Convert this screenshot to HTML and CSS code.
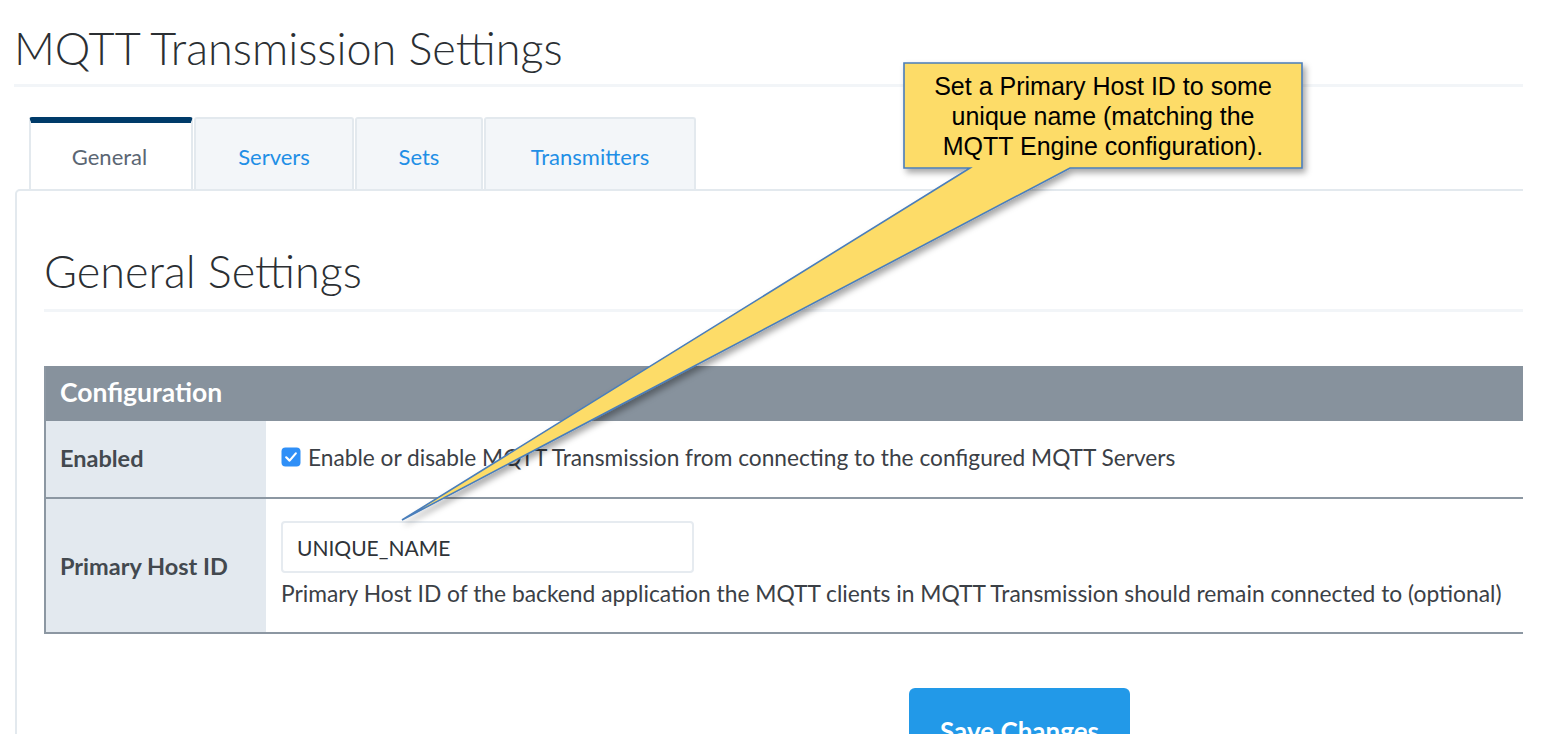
FILE: index.html
```html
<!DOCTYPE html>
<html lang="en">
<head>
<meta charset="utf-8">
<title>MQTT Transmission Settings</title>
<link rel="stylesheet" href="styles.css">
</head>
<body>
<div class="page">
  <h1 class="title">MQTT Transmission Settings</h1>
  <ul class="tabs">
    <li class="tab tab-active tab-general">General</li>
    <li class="tab tab-servers">Servers</li>
    <li class="tab tab-sets">Sets</li>
    <li class="tab tab-transmitters">Transmitters</li>
  </ul>
  <div class="panel">
    <h2 class="section-title">General Settings</h2>
    <div class="config">
      <div class="config-head">Configuration</div>
      <div class="config-row row-enabled">
        <div class="config-label">Enabled</div>
        <div class="config-value">
          <label class="check-line">
            <span class="checkbox">
              <svg viewBox="0 0 20 20" width="20" height="20"><rect x="0.5" y="0.5" width="19" height="19" rx="4" fill="#2f8ff7"/><path d="M5.2 10.3 L8.6 13.6 L14.8 6.4" fill="none" stroke="#fff" stroke-width="2.2" stroke-linecap="round" stroke-linejoin="round"/></svg>
            </span>
            <span>Enable or disable MQTT Transmission from connecting to the configured MQTT Servers</span>
          </label>
        </div>
      </div>
      <div class="config-row row-host">
        <div class="config-label">Primary Host ID</div>
        <div class="config-value value-host">
          <div class="text-input">UNIQUE_NAME</div>
          <div class="help">Primary Host ID of the backend application the MQTT clients in MQTT Transmission should remain connected to (optional)</div>
        </div>
      </div>
    </div>
    <div class="actions">
      <button class="btn-save">Save Changes</button>
    </div>
  </div>

  <div class="callout">
    <svg class="callout-shape" width="1000" height="560" viewBox="0 0 1000 560">
      <defs>
        <filter id="sh" x="-10%" y="-10%" width="130%" height="130%">
          <feDropShadow dx="3" dy="4" stdDeviation="3" flood-color="#000" flood-opacity="0.35"/>
        </filter>
      </defs>
      <path d="M904 63 H1302 V168 H1070 L402 520 L970 168 H904 Z" fill="#fddc67" stroke="#4a7ebb" stroke-width="1.6" stroke-linejoin="miter" filter="url(#sh)" transform="translate(-380 0)"/>
    </svg>
    <div class="callout-text">Set a Primary Host ID to some<br>unique name (matching the<br>MQTT Engine configuration).</div>
  </div>
</div>
</body>
</html>
```

FILE: styles.css
```css
* { box-sizing: border-box; }

html, body {
  margin: 0;
  padding: 0;
  background: #ffffff;
}

body {
  font-family: "Lato", "Open Sans", sans-serif;
  color: #3f454b;
}

.page {
  position: relative;
  width: 1523px;
  height: 734px;
  padding-left: 15px;
  overflow: hidden;
}

.title {
  margin: 0;
  padding-top: 22px;
  height: 87px;
  font-size: 45px;
  line-height: 52px;
  font-weight: 300;
  color: #2b2f33;
  border-bottom: 3px solid #f2f5f8;
  margin-left: -1px;
}

.tabs {
  list-style: none;
  margin: 30px 0 0 0;
  padding: 0 0 0 14px;
  display: flex;
  gap: 1px;
  height: 72px;
}

.tab {
  height: 72px;
  display: flex;
  align-items: center;
  justify-content: center;
  font-size: 22px;
  color: #1f8fe6;
  background: #f3f6f9;
  border: 2px solid #e3e9ee;
  border-bottom: none;
  border-top-left-radius: 3px;
  border-top-right-radius: 3px;
  padding-top: 4px;
}

.tab-active {
  background: #ffffff;
  color: #5b6673;
  border-top: 6px solid #003b69;
  padding-top: 0;
}

.tab-general { width: 164px; padding-right: 3px; }
.tab-servers { width: 160px; }
.tab-sets { width: 128px; }
.tab-transmitters { width: 212px; }

.panel {
  border: 2px solid #e3e9ee;
  border-top-left-radius: 5px;
  margin-right: -40px;
  padding: 0 40px 40px 27px;
  height: 600px;
  margin-top: 0;
}

.section-title {
  margin: 0;
  padding-top: 54px;
  height: 121px;
  font-size: 45px;
  line-height: 52px;
  font-weight: 300;
  color: #2b2f33;
  border-bottom: 3px solid #f2f5f8;
  margin-right: -10px;
}

.config {
  margin-top: 54px;
  border-left: 2px solid #8c97a2;
  margin-right: -10px;
}

.config-head {
  height: 55px;
  background: #87929d;
  color: #ffffff;
  font-weight: 700;
  font-size: 26.5px;
  display: flex;
  align-items: center;
  padding-left: 14px;
  padding-bottom: 3px;
}

.config-row {
  display: flex;
  border-bottom: 2px solid #8c97a2;
}

.row-enabled { height: 78px; }
.row-host { height: 135px; }

.config-label {
  width: 220px;
  flex: none;
  background: #e3e9ef;
  display: flex;
  align-items: center;
  padding-left: 14px;
  font-weight: 700;
  font-size: 23.5px;
  color: #43494f;
}

.row-enabled .config-label { padding-bottom: 3px; }

.config-value {
  flex: 1;
  display: flex;
  align-items: center;
  padding-left: 15px;
  font-size: 22.7px;
  color: #3b4046;
}

.row-enabled .config-value { padding-bottom: 4px; }

.check-line {
  display: flex;
  align-items: center;
  gap: 7px;
}

.checkbox {
  display: flex;
  width: 20px;
  height: 20px;
}

.value-host {
  flex-direction: column;
  align-items: flex-start;
  justify-content: flex-start;
  padding-top: 22px;
}

.text-input {
  width: 413px;
  height: 52px;
  border: 2px solid #e6ebf0;
  border-radius: 4px;
  display: flex;
  align-items: center;
  padding-left: 14px;
  font-size: 21px;
  color: #2f3338;
  background: #ffffff;
}

.help {
  margin-top: 5px;
  font-size: 22.8px;
  line-height: 30px;
  color: #3b4046;
}

.actions {
  margin-top: 54px;
  padding-left: 865px;
}

.btn-save {
  width: 221px;
  height: 70px;
  border: none;
  border-radius: 6px;
  background: #2299e8;
  color: #ffffff;
  font-family: "Lato", "Open Sans", sans-serif;
  font-weight: 700;
  font-size: 26px;
  padding-top: 16px;
}

.callout {
  position: absolute;
  left: 380px;
  top: 0;
  width: 1000px;
  height: 560px;
  pointer-events: none;
}

.callout-shape {
  position: absolute;
  left: 0;
  top: 0;
  overflow: visible;
}

.callout-text {
  position: absolute;
  left: 524px;
  top: 63px;
  width: 398px;
  padding-top: 8px;
  text-align: center;
  font-family: "Liberation Sans", Arial, sans-serif;
  font-size: 25px;
  line-height: 30px;
  color: #000000;
}
```
